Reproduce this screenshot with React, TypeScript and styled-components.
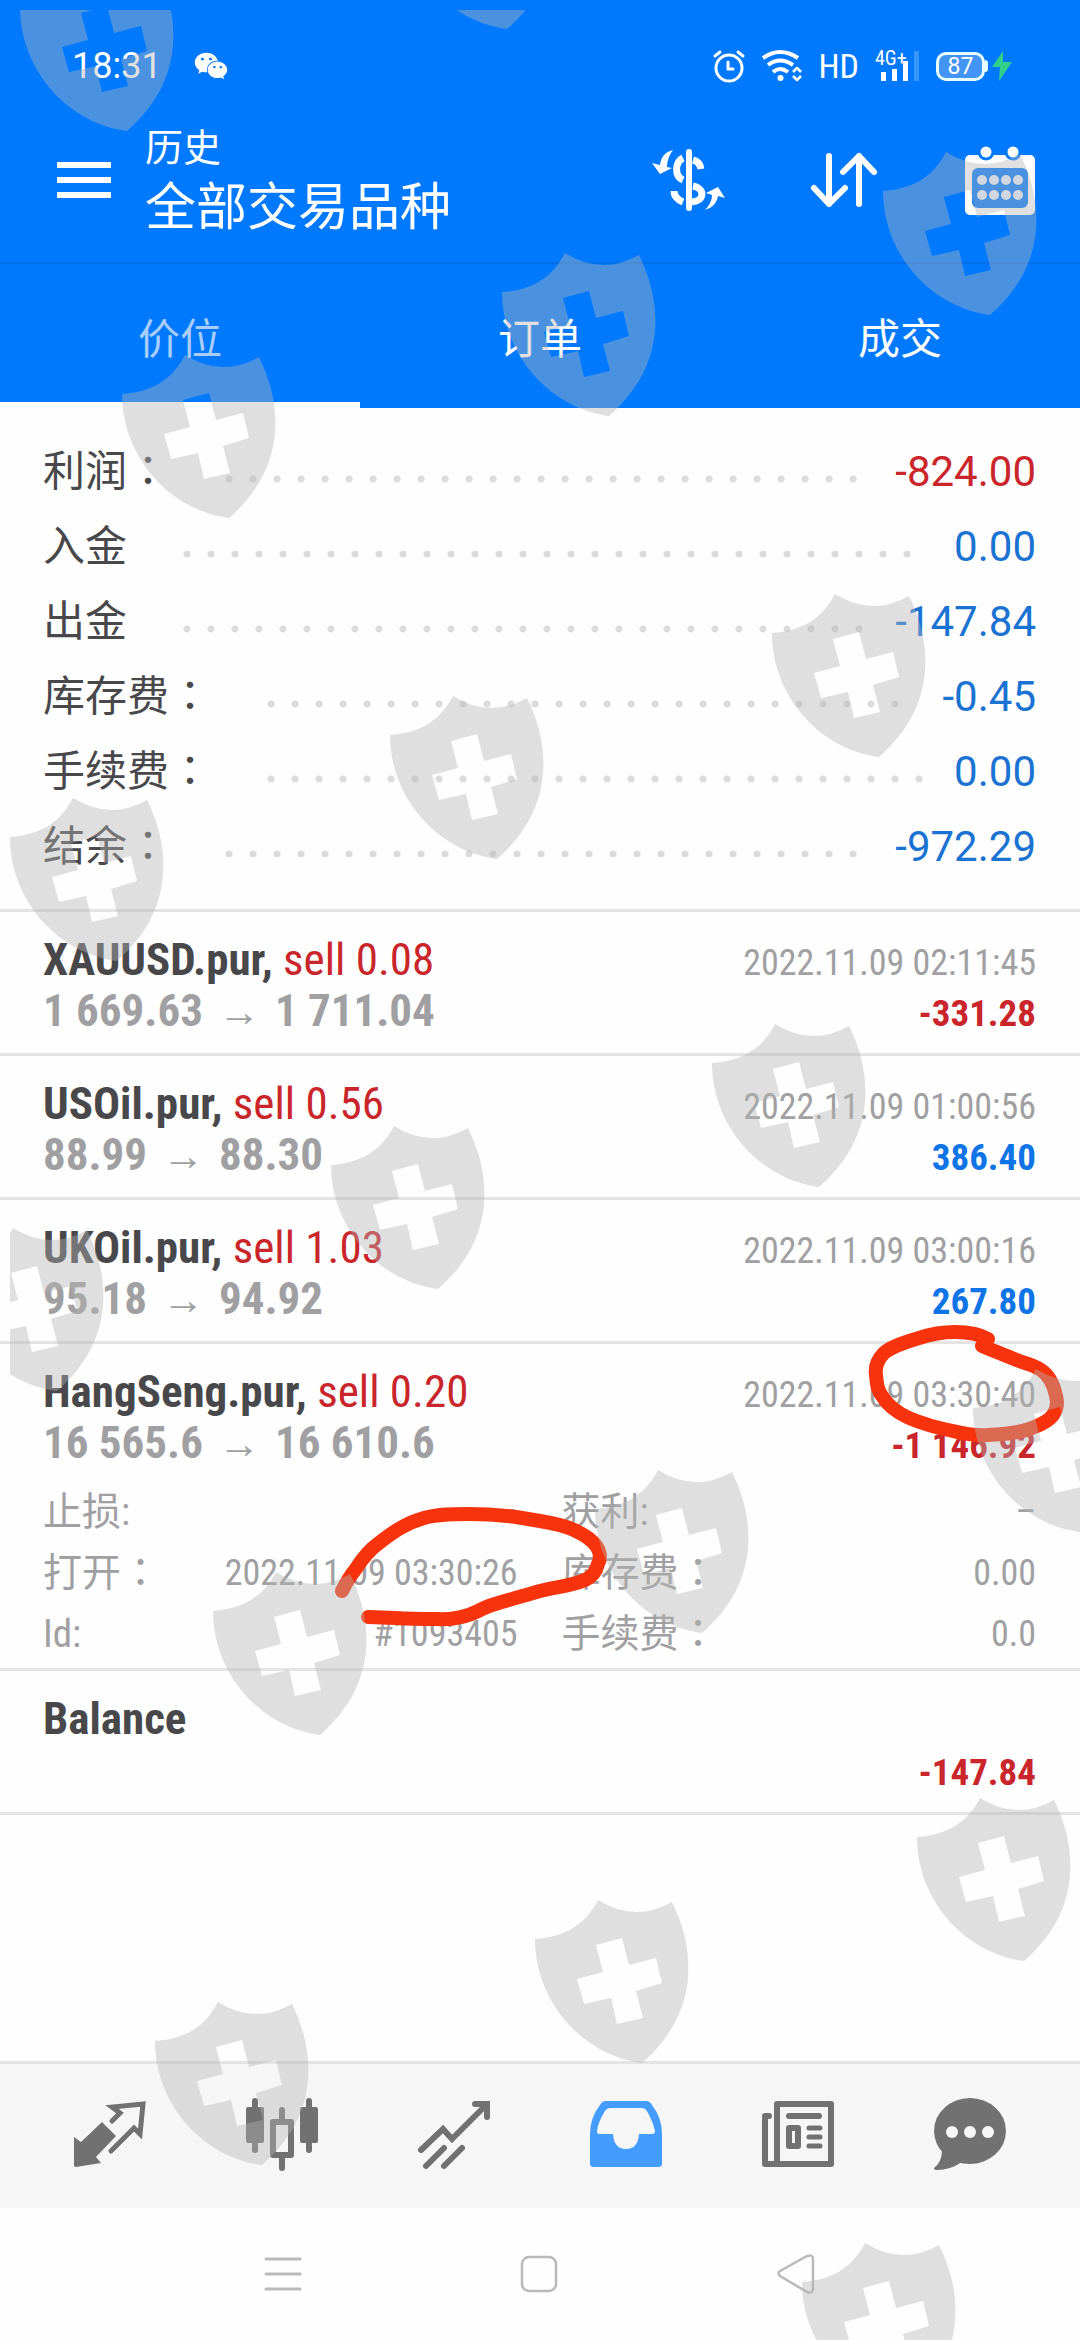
import React from "react";
import styled, { createGlobalStyle } from "styled-components";
import { FaWeixin } from "react-icons/fa";

const SANS = `Roboto, "Noto Sans CJK SC", sans-serif`;
const CONDENSED = `"Roboto Condensed", "Liberation Sans Narrow", Roboto, "Noto Sans CJK SC", sans-serif`;

const color = {
  brand: "#0079ff",
  brandLine: "#006fea",
  ink: "#48484b",
  muted: "#a0a0a2",
  loss: "#c9252b",
  gain: "#1a73d2",
  gainStrong: "#0f74e6",
  line: "#e4e4e4",
  icon: "#717171",
  activeIcon: "#449cff",
};

const GlobalStyle = createGlobalStyle`
  *, *::before, *::after { box-sizing: border-box; }
  body { margin: 0; background: #fefefe; font-family: ${SANS}; }
  button { margin: 0; padding: 0; border: 0; background: none; font: inherit; color: inherit; cursor: pointer; }
  svg { display: block; overflow: visible; }
  h1, p, dl, dt, dd, ul { margin: 0; padding: 0; font-weight: 400; }
  ul { list-style: none; }
`;

const Screen = styled.div`
  position: relative;
  display: flex;
  flex-direction: column;
  min-height: 100vh;
  overflow: hidden;
  background: #fefefe;
`;

/* ---------- header ---------- */

const Header = styled.header`
  background: ${color.brand};
  color: #fff;
`;

const StatusBar = styled.div`
  display: flex;
  align-items: center;
  justify-content: space-between;
  padding: 48px 68px 0 72px;
  line-height: 36px;
`;

const StatusGroup = styled.div<{ $gap: number }>`
  display: flex;
  align-items: center;
  gap: ${(p) => p.$gap}px;
`;

const Clock = styled.span`
  font-size: 36px;
`;

const Hd = styled.span`
  font-family: ${CONDENSED};
  font-size: 34px;
`;

const Signal = styled.div`
  position: relative;
`;

const SignalLabel = styled.span`
  position: absolute;
  left: 0;
  top: -2px;
  font-family: ${CONDENSED};
  font-size: 20px;
  line-height: 20px;
`;

const BatteryWrap = styled.div`
  display: flex;
  align-items: center;
`;

const Battery = styled.span`
  width: 49px;
  height: 29px;
  border: 3px solid #e8ffff;
  border-radius: 10px;
  background: #4294f5;
  font-size: 23px;
  line-height: 23px;
  text-align: center;
`;

const BatteryNub = styled.span`
  width: 3px;
  height: 12px;
  margin-right: 4px;
  border-radius: 0 3px 3px 0;
  background: #e8ffff;
`;

const AppBar = styled.div`
  display: flex;
  align-items: center;
  padding: 14px 44px 0 57px;
  height: 180px;
  border-bottom: 2px solid ${color.brandLine};
`;

const Titles = styled.div`
  flex: 1;
  margin-left: 33px;
`;

const Caption = styled.p`
  font-size: 38px;
  line-height: 56px;
`;

const Title = styled.h1`
  font-size: 51px;
  line-height: 64px;
`;

const Actions = styled.div`
  display: flex;
  gap: 87px;
`;

const Tabs = styled.div`
  display: grid;
  grid-template-columns: repeat(3, 1fr);
  height: 144px;
`;

const Tab = styled.button<{ $active?: boolean }>`
  padding-top: 4px;
  border-bottom: 6px solid ${(p) => (p.$active ? "#fff" : color.brand)};
  color: ${(p) => (p.$active ? "#a9cdf8" : "#fff")};
  font-size: 42px;
`;

/* ---------- summary ---------- */

const Summary = styled.dl`
  padding: 26px 44px 25px 43px;
  border-bottom: 3px solid ${color.line};
`;

const SummaryRow = styled.div`
  display: flex;
  height: 75px;
  font-size: 42px;
  line-height: 75px;
`;

const SummaryLabel = styled.dt`
  color: ${color.ink};
`;

const Leader = styled.span`
  flex: 1;
  margin: 0 18px 0 48px;
  &::before {
    content: "";
    display: block;
    height: 75px;
    width: round(down, 100%, 24px);
    background: radial-gradient(circle at 12px 45px, #dcdcdc 3px, transparent 4px) 0 0 / 24px 75px;
  }
`;

const SummaryValue = styled.dd<{ $negative?: boolean }>`
  color: ${(p) => (p.$negative ? color.loss : color.gain)};
`;

const WideColon = styled.span`
  font-family: "Noto Sans CJK JP", sans-serif;
  line-height: 1;
`;

/* ---------- deals ---------- */

const Deal = styled.li<{ $expanded?: boolean }>`
  padding: 22px 44px ${(p) => (p.$expanded ? 3 : 17)}px 43px;
  border-bottom: 3px solid ${color.line};
  font-family: ${CONDENSED};
`;

const DealLine = styled.div`
  display: flex;
  align-items: baseline;
  height: 51px;
  font-size: 45px;
  line-height: 51px;
  white-space: pre;
  &::before {
    content: "\\200b";
  }
`;

const Symbol = styled.span`
  font-weight: 700;
  color: ${color.ink};
`;

const Side = styled.span`
  font-weight: 400;
  color: ${color.loss};
`;

const Prices = styled.span`
  font-weight: 700;
  color: ${color.muted};
`;

const Arrow = styled.span`
  margin: 0 15px;
  font-family: "Liberation Sans", sans-serif;
  font-size: 42px;
  font-weight: 400;
  line-height: 1;
`;

const Time = styled.time`
  margin-left: auto;
  font-size: 36px;
  color: ${color.muted};
`;

const Profit = styled.span<{ $negative?: boolean }>`
  margin-left: auto;
  font-size: 37px;
  font-weight: 700;
  color: ${(p) => (p.$negative ? color.loss : color.gainStrong)};
`;

const Details = styled.dl`
  display: grid;
  grid-template-columns: 1fr 1fr;
  column-gap: 44px;
  margin-top: 14px;
  line-height: 61px;
  color: ${color.muted};
`;

const Detail = styled.div`
  display: flex;
  justify-content: space-between;
  height: 61px;
`;

const DetailLabel = styled.dt`
  font-size: 39px;
`;

const DetailValue = styled.dd`
  font-size: 36px;
`;

const Content = styled.main`
  flex: 1;
`;

/* ---------- bottom bars ---------- */

const BottomNav = styled.nav`
  display: flex;
  height: 147px;
  padding: 0 24px;
  border-top: 3px solid ${color.line};
  background: #f6f6f6;
`;

const NavButton = styled.button<{ $active?: boolean }>`
  flex: 1;
  display: flex;
  align-items: center;
  justify-content: center;
  color: ${(p) => (p.$active ? color.activeIcon : color.icon)};
`;

const SystemBar = styled.div`
  display: flex;
  align-items: center;
  justify-content: center;
  gap: 220px;
  height: 132px;
  color: #b9b9b9;
`;

const Overlay = styled.svg`
  position: absolute;
  top: 0;
  left: 0;
  width: 100%;
  pointer-events: none;
`;

/* ---------- icons ---------- */

const stroke = {
  fill: "none",
  stroke: "currentColor",
  strokeLinecap: "round" as const,
  strokeLinejoin: "round" as const,
};

const MenuIcon = () => (
  <svg width="55" height="36" fill="currentColor">
    <path d="M0 0h54v6H0zM0 15h54v6H0zM0 30h54v6H0z" />
  </svg>
);

const CurrencyIcon = () => (
  <svg width="72" height="62">
    <g {...stroke} strokeWidth="6" strokeLinecap="butt">
      <path d="M37 3V59" strokeLinecap="round" />
      <path strokeWidth="7" d="M31 9C23 13 22 27 31 31M41 11C45 12 48 14 49 20M41 37C53 39 53 52 40 53M22 42C22 47 26 51 31 53" />
    </g>
    <path
      fill="currentColor"
      d="M21 1C13 3 9 8 8 16L0 14L8 25L20 19L15 18C15 12 17 6 21 1ZM53 61C57 57 60 52 60 46L54 44L66 38L73 49L66 47C65 54 60 59 53 61Z"
    />
  </svg>
);

const SortIcon = () => (
  <svg width="66" height="56" {...stroke} strokeWidth="6">
    <path d="M18 4V52M3 36L18 52L34 36M48 52V4M32 20L48 4L63 20" />
  </svg>
);

const CalendarIcon = () => (
  <svg width="72" height="70">
    <rect x="1" y="10" width="70" height="60" rx="5" fill="currentColor" />
    <rect x="8" y="23" width="56" height="40" rx="6" fill={color.brand} />
    {[22, 49].map((x) => (
      <circle key={x} cx={x} cy="7" r="7" fill="currentColor" stroke={color.brand} strokeWidth="3" />
    ))}
    {[35, 50].flatMap((y) =>
      [18, 30, 42, 54].map((x) => (
        <circle key={`${x}-${y}`} cx={x} cy={y} r="5" fill="#e6efff" />
      ))
    )}
  </svg>
);

const AlarmIcon = () => (
  <svg width="32" height="32" {...stroke} strokeWidth="3">
    <circle cx="16" cy="18" r="13" />
    <path d="M15 12V19H20M2 6L7 2M25 2L30 6" />
  </svg>
);

const WifiIcon = () => (
  <svg width="42" height="32" {...stroke} strokeWidth="4" strokeLinecap="butt">
    <path d="M2 8Q19 -4 37 8M7 15Q19 6 32 15M12 22Q19 16 27 22" />
    <circle cx="19.5" cy="28" r="3" fill="currentColor" stroke="none" />
    <path strokeWidth="2.5" d="M32 22L36 18L40 22M32 26L36 30L40 26" />
  </svg>
);

const SignalIcon = () => (
  <svg width="45" height="32" fill="currentColor">
    <path d="M6 22h5v9H6zM17 19h5v12h-5zM28 11h5v20h-5z" />
    <path d="M39 1h5v30h-5z" opacity=".22" />
  </svg>
);

const BoltIcon = () => (
  <svg width="20" height="32" fill="#30d08a">
    <path d="M11 1L0 17H8L7 31L20 12H11Z" />
  </svg>
);

const QuotesIcon = () => (
  <svg width="72" height="72">
    <path fill="currentColor" d="M0 37L7 42L28 22L42 36L22 57L27 63L2 67Q0 67 0 65Z" />
    <path {...stroke} strokeWidth="5" d="M38 21L46 13L38 7L69 4L66 34L60 28L37 51" strokeLinejoin="miter" />
  </svg>
);

const CandlesIcon = () => (
  <svg width="72" height="72" {...stroke}>
    <path strokeWidth="6" d="M9 1V50M63 1V50M36 10V20M36 58V68" />
    <path fill="currentColor" stroke="none" d="M2 7h14q2 0 2 2v32q0 2-2 2H2q-2 0-2-2V9q0-2 2-2zM56 7h14q2 0 2 2v32q0 2-2 2H56q-2 0-2-2V9q0-2 2-2z" />
    <rect x="27" y="22" width="18" height="33" strokeWidth="6" />
  </svg>
);

const TrendIcon = () => (
  <svg width="72" height="72" {...stroke} strokeWidth="6" strokeLinejoin="miter">
    <path d="M3 50L25 29L34 39L68 5M57 4H69V17M26 48L8 66M44 48L26 66" />
  </svg>
);

const TrayIcon = () => (
  <svg width="72" height="72">
    <path
      fill="currentColor"
      fillRule="evenodd"
      d="M16 1H56Q60 1 62 5Q72 18 72 34V64Q72 67 68 67H4Q0 67 0 64V34Q0 18 10 5Q12 1 16 1ZM20 8Q17 8 15 11Q8 22 7 31Q7 34 9 34H23Q24 49 36 49Q48 49 49 34H62Q65 34 65 31Q63 22 57 11Q55 8 52 8Z"
    />
  </svg>
);

const NewsIcon = () => (
  <svg width="72" height="72" {...stroke} strokeWidth="6">
    <rect x="15" y="4" width="54" height="60" />
    <path d="M7 16H3V64H14M27 16H57" />
    <rect x="27" y="28" width="9" height="18" strokeWidth="6" />
    <path strokeWidth="5" d="M47 28H58M47 37H58M47 46H58" />
  </svg>
);

const ChatIcon = () => (
  <svg width="72" height="72">
    <g fill="currentColor">
      <ellipse cx="36" cy="31" rx="36" ry="33" />
      <path d="M8 50Q8 62 0 68Q0 70 3 70Q16 70 28 62Z" />
    </g>
    {[18, 36, 54].map((x) => (
      <circle key={x} cx={x} cy="32" r="6" fill="#f6f6f6" />
    ))}
  </svg>
);

const RecentsIcon = () => (
  <svg width="36" height="36" {...stroke} strokeWidth="3">
    <path d="M1 3H35M1 18H35M1 33H35" />
  </svg>
);

const HomeIcon = () => (
  <svg width="36" height="36" {...stroke} strokeWidth="2.5">
    <rect x="1" y="1" width="34" height="34" rx="7" />
  </svg>
);

const BackIcon = () => (
  <svg width="38" height="40" {...stroke} strokeWidth="2.5">
    <path d="M3 17L30 2Q36 0 36 5V35Q36 40 30 38L3 22Q0 19 3 17Z" />
  </svg>
);

/* ---------- overlays ---------- */

const SHIELDS = [
  [20, -32], [400, -134], [883, 152], [502, 253], [122, 355],
  [772, 594], [390, 696], [10, 798], [712, 1024], [331, 1126], [-50, 1228],
  [973, 1369], [595, 1470], [213, 1572], [917, 1798], [535, 1900], [155, 2002],
  [802, 2243],
];

const Watermark = () => (
  <Overlay viewBox="0 0 1080 2340" aria-hidden="true">
    <defs>
      <clipPath id="sheet">
        <path d="M10 10H1080V2340H10Z" />
      </clipPath>
      <path
        id="shield"
        fillRule="evenodd"
        d="M0 39C30 37 50 25 63 0Q100 23 137 2C160 48 166 112 107 163Q104 163 101 162C45 152 0 100 0 39ZM61 45L87 38L94 65L121 58L127 83L101 91L108 118L82 124L76 98L49 104L42 79L68 72Z"
      />
    </defs>
    <g clipPath="url(#sheet)" fill="rgb(180,180,180)" fillOpacity=".41">
      {SHIELDS.map(([x, y]) => (
        <use key={`${x},${y}`} href="#shield" x={x} y={y} />
      ))}
    </g>
  </Overlay>
);

const Marker = () => (
  <Overlay
    viewBox="0 0 1080 2340"
    aria-hidden="true"
    fill="none"
    stroke="#f6330d"
    strokeWidth="14"
    strokeLinecap="round"
    strokeLinejoin="round"
  >
    <path d="M988 1339C978 1333 967 1332 955 1332C943 1332 931 1334 919 1338C906 1342 892 1346 884 1353C876 1361 875 1368 876 1375C877 1384 877 1389 882 1396C888 1406 898 1413 909 1418C923 1424 938 1428 953 1431C965 1434 976 1436 988 1435C1004 1434 1020 1433 1032 1428C1040 1425 1049 1421 1053 1415C1057 1409 1058 1403 1056 1396C1054 1386 1050 1376 1041 1370C1035 1366 1029 1364 1022 1362C1008 1357 995 1351 982 1346" />
    <path d="M342 1591C346 1583 350 1576 355 1570C362 1559 369 1550 379 1543C393 1532 406 1523 424 1518C438 1514 453 1514 468 1514C484 1514 500 1515 516 1517L540 1521C552 1523 564 1525 574 1530C583 1534 592 1539 597 1547C600 1552 601 1558 598 1564C596 1572 592 1577 585 1580C571 1586 555 1587 540 1591C523 1596 508 1600 492 1605C482 1608 473 1615 461 1617C453 1619 446 1620 437 1619C424 1619 410 1619 396 1618L368 1617" />
  </Overlay>
);

/* ---------- data ---------- */

const SUMMARY = [
  { label: "利润", colon: true, value: "-824.00", negative: true },
  { label: "入金", value: "0.00" },
  { label: "出金", value: "-147.84" },
  { label: "库存费", colon: true, value: "-0.45" },
  { label: "手续费", colon: true, value: "0.00" },
  { label: "结余", colon: true, value: "-972.29" },
];

const DEALS = [
  { symbol: "XAUUSD.pur", volume: "0.08", open: "1 669.63", close: "1 711.04", time: "2022.11.09 02:11:45", profit: "-331.28" },
  { symbol: "USOil.pur", volume: "0.56", open: "88.99", close: "88.30", time: "2022.11.09 01:00:56", profit: "386.40" },
  { symbol: "UKOil.pur", volume: "1.03", open: "95.18", close: "94.92", time: "2022.11.09 03:00:16", profit: "267.80" },
  {
    symbol: "HangSeng.pur",
    volume: "0.20",
    open: "16 565.6",
    close: "16 610.6",
    time: "2022.11.09 03:30:40",
    profit: "-1 146.92",
    details: [
      { label: "止损:", value: "–" },
      { label: "获利:", value: "–" },
      { label: "打开", colon: true, value: "2022.11.09 03:30:26" },
      { label: "库存费", colon: true, value: "0.00" },
      { label: "Id:", value: "#1093405" },
      { label: "手续费", colon: true, value: "0.0" },
    ],
  },
];

const NAV = [
  { name: "行情", icon: <QuotesIcon /> },
  { name: "图表", icon: <CandlesIcon /> },
  { name: "交易", icon: <TrendIcon /> },
  { name: "历史", icon: <TrayIcon />, active: true },
  { name: "新闻", icon: <NewsIcon /> },
  { name: "消息", icon: <ChatIcon /> },
];

const isLoss = (value: string) => value.startsWith("-");

export default function App() {
  return (
    <Screen>
      <GlobalStyle />
      <Header>
        <StatusBar>
          <StatusGroup $gap={32}>
            <Clock>18:31</Clock>
            <FaWeixin size={34} />
          </StatusGroup>
          <StatusGroup $gap={16}>
            <AlarmIcon />
            <WifiIcon />
            <Hd>HD</Hd>
            <Signal>
              <SignalIcon />
              <SignalLabel>4G+</SignalLabel>
            </Signal>
            <BatteryWrap>
              <Battery>87</Battery>
              <BatteryNub />
              <BoltIcon />
            </BatteryWrap>
          </StatusGroup>
        </StatusBar>
        <AppBar>
          <button aria-label="菜单"><MenuIcon /></button>
          <Titles>
            <Caption>历史</Caption>
            <Title>全部交易品种</Title>
          </Titles>
          <Actions>
            <button aria-label="品种"><CurrencyIcon /></button>
            <button aria-label="排序"><SortIcon /></button>
            <button aria-label="日期"><CalendarIcon /></button>
          </Actions>
        </AppBar>
        <Tabs role="tablist">
          <Tab role="tab" aria-selected="true" $active>价位</Tab>
          <Tab role="tab" aria-selected="false">订单</Tab>
          <Tab role="tab" aria-selected="false">成交</Tab>
        </Tabs>
      </Header>

      <Content>
        <Summary>
          {SUMMARY.map((row) => (
            <SummaryRow key={row.label}>
              <SummaryLabel>
                {row.label}
                {row.colon && <WideColon>：</WideColon>}
              </SummaryLabel>
              <Leader />
              <SummaryValue $negative={row.negative}>{row.value}</SummaryValue>
            </SummaryRow>
          ))}
        </Summary>
        <ul>
          {DEALS.map((deal) => (
            <Deal key={deal.symbol} $expanded={Boolean(deal.details)}>
              <DealLine>
                <Symbol>
                  {deal.symbol}, <Side>sell {deal.volume}</Side>
                </Symbol>
                <Time>{deal.time}</Time>
              </DealLine>
              <DealLine>
                <Prices>
                  {deal.open}
                  <Arrow>→</Arrow>
                  {deal.close}
                </Prices>
                <Profit $negative={isLoss(deal.profit)}>{deal.profit}</Profit>
              </DealLine>
              {deal.details && (
                <Details>
                  {deal.details.map((item) => (
                    <Detail key={item.label}>
                      <DetailLabel>
                        {item.label}
                        {item.colon && <WideColon>：</WideColon>}
                      </DetailLabel>
                      <DetailValue>{item.value}</DetailValue>
                    </Detail>
                  ))}
                </Details>
              )}
            </Deal>
          ))}
          <Deal>
            <DealLine>
              <Symbol>Balance</Symbol>
            </DealLine>
            <DealLine>
              <Profit $negative>-147.84</Profit>
            </DealLine>
          </Deal>
        </ul>
      </Content>

      <BottomNav>
        {NAV.map((item) => (
          <NavButton key={item.name} aria-label={item.name} $active={item.active}>
            {item.icon}
          </NavButton>
        ))}
      </BottomNav>
      <SystemBar>
        <button aria-label="最近任务"><RecentsIcon /></button>
        <button aria-label="主屏幕"><HomeIcon /></button>
        <button aria-label="返回"><BackIcon /></button>
      </SystemBar>

      <Marker />
      <Watermark />
    </Screen>
  );
}
